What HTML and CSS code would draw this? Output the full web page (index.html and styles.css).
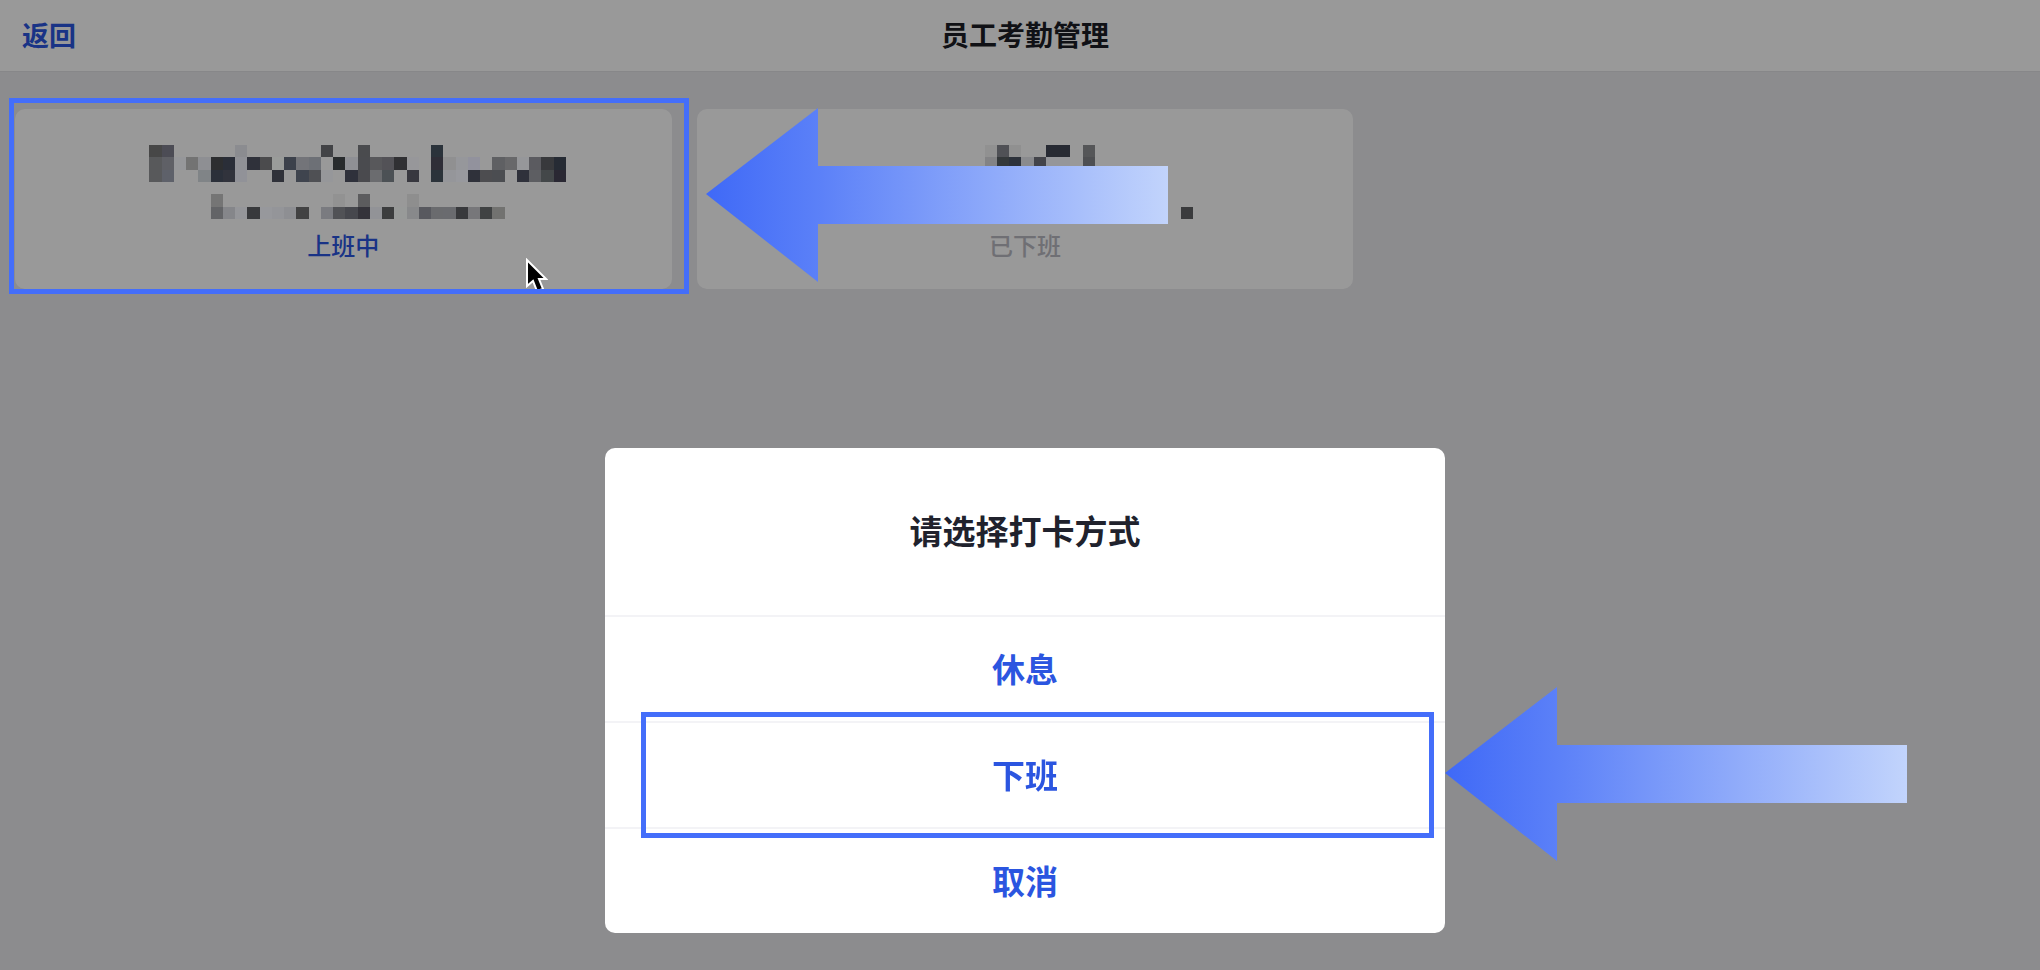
FILE: index.html
```html
<!DOCTYPE html>
<html lang="zh-CN">
<head>
    <meta charset="UTF-8">
    <meta name="viewport" content="width=device-width, initial-scale=1.0">
    <title>员工考勤管理</title>
    <link rel="stylesheet" href="styles.css">
</head>
<body>
    <header class="header">
        <a class="back" href="#">返回</a>
        <h1 class="title">员工考勤管理</h1>
    </header>

    <main class="staff-list">
        <div class="staff">
            <button class="card" type="button">
                <svg class="mosaic mosaic-wide" id="mosaic1" viewBox="-2.4 0 36.4 6" preserveAspectRatio="none" aria-hidden="true"></svg>
                <span class="status working">上班中</span>
            </button>
            <svg class="cursor" viewBox="0 0 22 36" aria-hidden="true">
                <path d="M1 2V28L7 23L11 33L17 31L13 21H20Z" fill="#000" stroke="#fff" stroke-width="2"/>
            </svg>
            <div class="highlight highlight-card"></div>
            <svg class="arrow arrow-card" viewBox="0 0 462 174" aria-hidden="true">
                <defs>
                    <linearGradient id="arrowFill">
                        <stop offset="0" stop-color="#3f69f7"/>
                        <stop offset="0.250" stop-color="#5c81f8"/>
                        <stop offset="1" stop-color="#c2d4fc"/>
                    </linearGradient>
                </defs>
                <path d="M0 86L112 0V58H462V116H112V174Z" fill="url(#arrowFill)"/>
            </svg>
        </div>
        <div class="staff">
            <button class="card" type="button">
                <svg class="mosaic mosaic-narrow" id="mosaic2" viewBox="-10.5 0 27.5 6" preserveAspectRatio="none" aria-hidden="true"></svg>
                <span class="status">已下班</span>
            </button>
        </div>
    </main>

    <div class="overlay">
        <div class="dialog" role="dialog" aria-labelledby="dialogTitle">
            <h2 class="dialog-title" id="dialogTitle">请选择打卡方式</h2>
            <button class="option" type="button">休息</button>
            <div class="option-wrap">
                <button class="option" type="button">下班</button>
                <div class="highlight highlight-option"></div>
                <svg class="arrow arrow-option" viewBox="0 0 462 174" aria-hidden="true">
                    <path d="M0 86L112 0V58H462V116H112V174Z" fill="url(#arrowFill)"/>
                </svg>
            </div>
            <button class="option" type="button">取消</button>
        </div>
    </div>

    <script>
        // each row: column -> colour of the block
        var mosaics = {
            mosaic1: [
                {0: '#474747', 1: '#4c4c55', 7: '#8b8c90', 14: '#424346', 17: '#4a4b4e', 23: '#2b333b'},
                {0: '#58595b', 1: '#5f6066', 2: '#96979a', 3: '#737373', 4: '#8e8f93', 5: '#2d2e30', 6: '#2a2e38', 7: '#909196',
                 8: '#2f313a', 9: '#4b4b4d', 10: '#9a9c9a', 11: '#3c414b', 12: '#737479', 13: '#6d7076', 15: '#282b2d', 16: '#8f9095',
                 17: '#4a4b4f', 18: '#58585b', 19: '#535257', 20: '#303033', 21: '#97979a', 23: '#2f2e37', 24: '#909091', 25: '#96979b',
                 26: '#92929d', 28: '#5f6063', 29: '#68686a', 30: '#96979a', 31: '#5b5b60', 32: '#38393c', 33: '#262b34'},
                {0: '#58595b', 1: '#5e616a', 4: '#808487', 5: '#2b303a', 6: '#31333c', 7: '#919298', 10: '#2f3139', 12: '#3f444e',
                 13: '#4f5054', 14: '#96979a', 16: '#2f313b', 17: '#4a4a4e', 18: '#6b6c6f', 19: '#4c5155', 21: '#38383f', 23: '#2b333a',
                 24: '#95969a', 25: '#98999e', 26: '#2f313a', 27: '#4d4d50', 28: '#4b4d51', 30: '#2f313b', 31: '#5d5e62', 32: '#434749', 33: '#2a2833'},
                {},
                {5: '#757575', 15: '#929292', 17: '#5c5c5e', 21: '#8e8e8e'},
                {5: '#636467', 6: '#85868a', 7: '#95969a', 8: '#38393c', 9: '#97989c', 10: '#949599', 11: '#8e8f93', 12: '#424243',
                 14: '#7a7b80', 15: '#515256', 16: '#46474d', 17: '#34333a', 18: '#929397', 19: '#3c3d3e', 20: '#989a99', 21: '#88898b',
                 22: '#58595f', 23: '#6a6b6e', 24: '#6a6b6f', 25: '#38393c', 26: '#77777a', 27: '#404243', 28: '#727270'}
            ],
            mosaic2: [
                {0: '#919191', 1: '#505156', 2: '#909090', 5: '#272a33', 6: '#272a33', 8: '#555658'},
                {0: '#838385', 1: '#34383a', 2: '#2d323b', 3: '#8a8b8e', 4: '#43444a', 5: '#95969a', 6: '#95969a', 8: '#4e4f52'},
                {}, {}, {},
                {16: '#3a3b3d'}
            ]
        };

        for (var id in mosaics) {
            var svg = document.getElementById(id);
            mosaics[id].forEach(function (row, y) {
                for (var x in row) {
                    var rect = document.createElementNS('http://www.w3.org/2000/svg', 'rect');
                    rect.setAttribute('x', x);
                    rect.setAttribute('y', y);
                    rect.setAttribute('width', 1);
                    rect.setAttribute('height', 1);
                    rect.setAttribute('fill', row[x]);
                    svg.appendChild(rect);
                }
            });
        }
    </script>
</body>
</html>
```
FILE: styles.css
```css
* {
    box-sizing: border-box;
}
body {
    margin: 0;
    min-height: 100vh;
    background-color: #e9e9ed;
    font-family: "Noto Sans CJK SC", sans-serif;
    overflow: hidden;
}
button {
    font-family: inherit;
    border: none;
    cursor: pointer;
}
.header {
    display: grid;
    grid-template-columns: 1fr auto 1fr;
    align-items: center;
    padding: 14px 12px 16px 22px;
    border-bottom: 1px solid #e2e2e5;
    background-color: #fff;
}
.back,
.title {
    margin: 0;
    font-size: 27px;
    line-height: 41px;
    font-weight: 700;
}
.back {
    color: #2b55e0;
    text-decoration: none;
}
.title {
    font-size: 28px;
    color: #1c1d26;
}
.staff-list {
    display: grid;
    grid-template-columns: repeat(3, 1fr);
    gap: 25px;
    padding: 37px 5px 37px 15px;
}
.staff {
    position: relative;
}
.card {
    display: flex;
    flex-direction: column;
    align-items: center;
    gap: 9px;
    width: 100%;
    padding: 36px 0 27px;
    border-radius: 10px;
    background-color: #fff;
}
.mosaic {
    position: relative;
    z-index: 2;
    height: 74px;
    shape-rendering: crispEdges;
}
.mosaic-wide {
    width: 446px;
}
.mosaic-narrow {
    width: 337px;
}
.status {
    font-size: 24px;
    line-height: 34px;
    font-weight: 500;
    color: #b9b9c2;
}
.status.working {
    color: #2b55e0;
}
.overlay {
    position: fixed;
    inset: 0;
    z-index: 1;
    display: flex;
    justify-content: center;
    align-items: flex-end;
    padding: 0 0 37px 10px;
    background-color: rgba(0, 0, 0, 0.4);
}
.dialog {
    width: 840px;
    border-radius: 10px;
    background-color: #fff;
}
.dialog-title {
    margin: 0;
    padding: 58px 0 61px;
    font-size: 33px;
    line-height: 48px;
    font-weight: 700;
    text-align: center;
    color: #20222d;
}
.option-wrap {
    position: relative;
}
.option {
    display: block;
    width: 100%;
    padding: 27px 0 29px;
    border-top: 2px solid #f3f3f6;
    background: none;
    font-size: 33px;
    line-height: 48px;
    font-weight: 700;
    color: #2b55e0;
}

/* guide marks */
.highlight {
    position: absolute;
    z-index: 3;
    border: 5px solid #446efa;
    pointer-events: none;
}
.highlight-card {
    inset: -11px -17px -5px -6px;
}
.highlight-option {
    inset: -9px 11px -11px 36px;
}
.arrow {
    position: absolute;
    z-index: 3;
    width: 462px;
    height: 174px;
    pointer-events: none;
}
.arrow-card {
    top: -1px;
    left: calc(100% + 34px);
}
.arrow-option {
    top: -34px;
    left: 100%;
}
.cursor {
    position: absolute;
    z-index: 2;
    right: 124px;
    bottom: -5px;
    width: 22px;
    height: 36px;
}
```
